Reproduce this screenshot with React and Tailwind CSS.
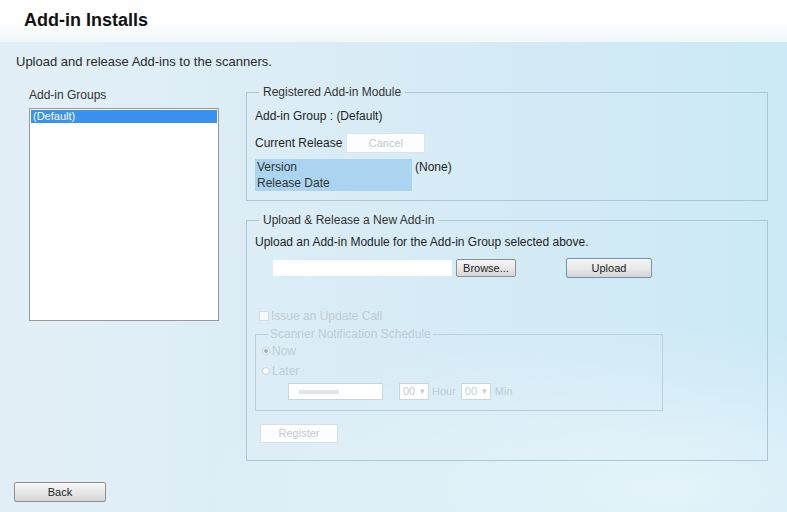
import React from 'react';

const Btn = ({ children, className = '' }) => (
  <button
    className={`h-[18px] border border-[#8e8f8f] rounded-[2px] bg-gradient-to-b from-[#f6f6f6] via-[#e8e8e8] to-[#d6d6d6] text-[11px] text-[#222] leading-none ${className}`}
  >
    {children}
  </button>
);

const AddinInstalls = () => {
  return (
    <div className="w-[787px] h-[512px] flex flex-col font-['Liberation_Sans',Arial,sans-serif] text-[12px] text-[#1e1e1e] overflow-hidden">
      {/* Page title */}
      <div className="h-[42px] bg-gradient-to-b from-white via-white to-[#f1f7fb] pl-[24px] pt-[10px]">
        <h1 className="text-[18px] font-bold leading-[20px] text-[#111]">Add-in Installs</h1>
      </div>

      <div className="flex-1 flex flex-col bg-[radial-gradient(ellipse_60%_35%_at_85%_95%,rgba(255,255,255,0.45),transparent),linear-gradient(to_right,#e3eff7,#d8ecf6,#cbe9f6)]">
        <p className="pl-[16px] pt-[13px] leading-[14px] text-[13px] text-[#2a2a2a]">
          Upload and release Add-ins to the scanners.
        </p>

        <div className="flex mt-[16px]">
          {/* Group list */}
          <div className="w-[246px] pl-[29px] pt-[3px]">
            <div className="leading-[14px] text-[#333]">Add-in Groups</div>
            <div className="mt-[6px] w-[190px] h-[213px] bg-white border border-[#9a9a9a] p-[1px]">
              <div className="h-[13px] bg-[#3a92f0] text-white text-[11px] leading-[13px] pl-[2px]">(Default)</div>
            </div>
          </div>

          {/* Module details */}
          <div className="w-[522px] flex flex-col">
            <fieldset className="border border-[#aac8d6] px-[8px] pb-[9px] pt-0 m-0">
              <legend className="px-[4px] ml-[4px] leading-[14px] text-[#333]">Registered Add-in Module</legend>
              <div className="mt-[10px] leading-[14px]">Add-in Group : (Default)</div>
              <div className="flex items-center mt-[10px] h-[20px]">
                <span className="leading-[14px]">Current Release</span>
                <button className="ml-[4px] w-[79px] h-[20px] bg-white/90 border border-[#dce6ea] text-[11px] text-[#c2cbd0]">
                  Cancel
                </button>
              </div>
              <div className="mt-[6px] flex">
                <div className="w-[157px]">
                  <div className="h-[16px] bg-[#aad4ef] leading-[16px] pl-[2px] text-[#333]">Version</div>
                  <div className="h-[16px] bg-[#aad4ef] leading-[16px] pl-[2px] text-[#333]">Release Date</div>
                </div>
                <span className="ml-[3px] leading-[16px]">(None)</span>
              </div>
            </fieldset>

            <fieldset className="mt-[12px] border border-[#aac8d6] px-[8px] pb-[17px] pt-0 m-0">
              <legend className="px-[4px] ml-[4px] leading-[14px] text-[#333]">Upload &amp; Release a New Add-in</legend>
              <div className="mt-[8px] leading-[14px]">Upload an Add-in Module for the Add-in Group selected above.</div>
              <div className="flex items-center mt-[9px] pl-[18px]">
                <div className="w-[179px] h-[16px] bg-white" />
                <Btn className="ml-[4px] w-[60px]">Browse...</Btn>
                <button className="ml-[50px] w-[86px] h-[20px] border border-[#6d97b3] rounded-[2px] bg-gradient-to-b from-[#f4f4f4] via-[#e9e9e9] to-[#d4d4d4] text-[11px] text-[#222] shadow-[0_0_0_1px_#cfe6f3]">
                  Upload
                </button>
              </div>

              {/* Disabled notification options */}
              <div className="mt-[31px] flex items-center text-[#bfcdd4] leading-[14px]">
                <span className="ml-[4px] w-[10px] h-[10px] border border-[#d2dde2] bg-white/70" />
                <span className="ml-[2px]">Issue an Update Call</span>
              </div>
              <fieldset className="mt-[4px] w-[408px] border border-[#b9d1dc] pl-[6px] pb-[10px] pt-0 m-0 text-[#bfcdd4]">
                <legend className="px-[2px] ml-[6px] leading-[14px]">Scanner Notification Schedule</legend>
                <div className="flex items-center mt-[3px] leading-[14px]">
                  <span className="w-[8px] h-[8px] rounded-full border border-[#c4d1d7] bg-white flex items-center justify-center">
                    <span className="w-[4px] h-[4px] rounded-full bg-[#9fb0b8]" />
                  </span>
                  <span className="ml-[2px]">Now</span>
                </div>
                <div className="flex items-center mt-[6px] leading-[14px]">
                  <span className="w-[8px] h-[8px] rounded-full border border-[#c4d1d7] bg-white" />
                  <span className="ml-[2px]">Later</span>
                </div>
                <div className="flex items-center mt-[5px] pl-[26px] text-[11px]">
                  <div className="w-[95px] h-[17px] bg-white border border-[#cad6dc] pl-[10px] flex items-center">
                    <span className="w-[40px] h-[4px] bg-[#e0e6e9]" />
                  </div>
                  <div className="ml-[16px] w-[30px] h-[17px] bg-white border border-[#cad6dc] flex items-center justify-between px-[3px]">
                    <span>00</span>
                    <span className="text-[9px]">▾</span>
                  </div>
                  <span className="ml-[3px]">Hour</span>
                  <div className="ml-[5px] w-[30px] h-[17px] bg-white border border-[#cad6dc] flex items-center justify-between px-[3px]">
                    <span>00</span>
                    <span className="text-[9px]">▾</span>
                  </div>
                  <span className="ml-[4px]">Min</span>
                </div>
              </fieldset>
              <button className="mt-[13px] ml-[5px] w-[78px] h-[19px] bg-white/90 border border-[#d6e0e4] text-[11px] text-[#c2cbd0]">
                Register
              </button>
            </fieldset>
          </div>
        </div>

        <div className="pl-[14px] mt-[21px]">
          <Btn className="w-[92px] h-[20px]">Back</Btn>
        </div>
      </div>
    </div>
  );
};

export default function App() {
  return <AddinInstalls />;
}
